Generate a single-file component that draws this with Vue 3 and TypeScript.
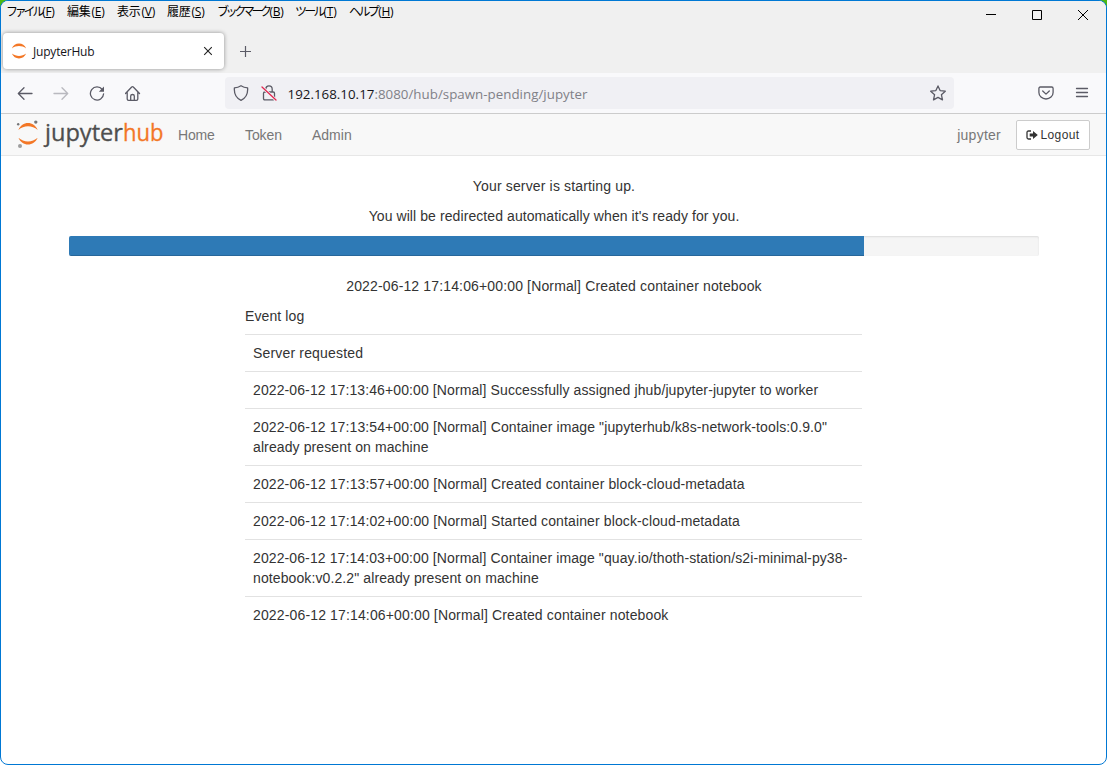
<script setup lang="ts">
interface MenuItem { label: string; key: string; width: number; spacing: number }
interface LogEvent { text: string; spacing: number }

const menus: MenuItem[] = [
  { label: 'ファイル', key: 'F', width: 61, spacing: -3.2 },
  { label: '編集', key: 'E', width: 50, spacing: -0.2 },
  { label: '表示', key: 'V', width: 50, spacing: -0.2 },
  { label: '履歴', key: 'S', width: 50, spacing: -0.2 },
  { label: 'ブックマーク', key: 'B', width: 78, spacing: -3.4 },
  { label: 'ツール', key: 'T', width: 54, spacing: -2.8 },
  { label: 'ヘルプ', key: 'H', width: 50, spacing: -2.6 },
]

const progress = 82
const current = '2022-06-12 17:14:06+00:00 [Normal] Created container notebook'
const events: LogEvent[] = [
  { text: 'Server requested', spacing: 0.17 },
  { text: '2022-06-12 17:13:46+00:00 [Normal] Successfully assigned jhub/jupyter-jupyter to worker', spacing: 0.105 },
  { text: '2022-06-12 17:13:54+00:00 [Normal] Container image "jupyterhub/k8s-network-tools:0.9.0" already present on machine', spacing: 0.11 },
  { text: '2022-06-12 17:13:57+00:00 [Normal] Created container block-cloud-metadata', spacing: 0.12 },
  { text: '2022-06-12 17:14:02+00:00 [Normal] Started container block-cloud-metadata', spacing: 0.12 },
  { text: '2022-06-12 17:14:03+00:00 [Normal] Container image "quay.io/thoth-station/s2i-minimal-py38-notebook:v0.2.2" already present on machine', spacing: 0.105 },
  { text: current, spacing: 0.145 },
]
</script>

<template>
  <div class="desktop">
    <div class="window">
      <header class="titlebar">
        <nav class="menus">
          <span v-for="m in menus" :key="m.key" class="menu" :style="{ width: m.width + 'px' }"><span :style="{ letterSpacing: m.spacing + 'px' }">{{ m.label }}</span><span class="accel">(<u>{{ m.key }}</u>)</span></span>
        </nav>
        <div class="controls">
          <svg width="12" height="12" viewBox="0 0 12 12"><path d="M1 5.5h10" /></svg>
          <svg width="12" height="12" viewBox="0 0 12 12"><path d="M1.5 1.5h9v9h-9z" /></svg>
          <svg width="12" height="12" viewBox="0 0 12 12"><path d="M1 1l10 10M11 1L1 11" /></svg>
        </div>
      </header>

      <div class="tabs">
        <div class="tab">
          <svg class="favicon" width="16" height="16" viewBox="0 0 16 16"><path d="M.8 5.400C2.200 2.200 4.800.5 8 .5s5.800 1.700 7.200 4.900C13 3.700 10.500 3 8 3S3 3.700.8 5.400zM.8 10.600C2.200 13.800 4.800 15.500 8 15.500s5.800-1.700 7.200-4.900C13 12.300 10.500 13 8 13s-5-.7-7.200-2.400z" /></svg>
          <span class="tab-title">JupyterHub</span>
          <svg class="tab-close" width="10" height="10" viewBox="0 0 10 10"><path d="M1.200 1.200l7.600 7.600M8.800 1.200L1.200 8.800" /></svg>
        </div>
        <svg class="new-tab" width="12" height="12" viewBox="0 0 12 12"><path d="M5.500 0v11M0 5.500h11" /></svg>
      </div>

      <div class="toolbar">
        <div class="nav-icons">
          <svg width="16" height="16" viewBox="0 0 16 16"><path d="M15 8.500H1.500M7 2.700L1.300 8.500 7 14.300" /></svg>
          <svg class="disabled" width="16" height="16" viewBox="0 0 16 16"><path d="M1 8.500h13.500M9 2.700L14.700 8.500 9 14.300" /></svg>
          <svg width="16" height="16" viewBox="0 0 16 16"><path d="M13.300 4.500A6.600 6.600 0 1 0 14.600 8.800" /><path d="M15 1.500v5.200H9.800z" fill="#5b5b66" stroke="none" /></svg>
          <svg width="16" height="16" viewBox="0 0 16 16"><path d="M.5 8.500l6.200-6.500q.8-.7 1.600 0L14.500 8.500M2.200 7.300v6.600q0 1.400 1.400 1.400h7.800q1.400 0 1.400-1.400V7.300M5.700 15v-4q0-1.500 1.800-1.500t1.800 1.500v4" /></svg>
        </div>
        <div class="urlbar">
          <svg width="16" height="16" viewBox="0 0 16 16"><path d="M8 .7C6 2 3.800 2.700 1.400 2.900c-.5 6 1.800 10.300 6.600 12.400 4.800-2.100 7.100-6.400 6.600-12.400C12.200 2.700 10 2 8 .7z" /></svg>
          <svg class="lock" width="16" height="16" viewBox="0 0 16 16"><path d="M4.800 7V4.300C4.800 2.100 6.200.8 8 .8s3.200 1.300 3.200 3.500V7M3.800 7h8.400q1.300 0 1.300 1.300v5.200q0 1.300-1.300 1.300H3.800q-1.300 0-1.300-1.300V8.300Q2.500 7 3.800 7z" /><path d="M1 2l14 13" stroke="#f0f0f4" stroke-width="3" /><path d="M1 2l14 13" stroke="#e22850" /></svg>
          <span class="url"><b>192.168.10.17</b>:8080/hub/spawn-pending/jupyter</span>
          <svg class="star" width="16" height="16" viewBox="0 0 16 16"><path d="M8 .9l2.100 4.700 5.200.6-3.900 3.500 1.100 5.200L8 12.400 3.500 14.900l1.100-5.200L.7 6.200l5.200-.6z" /></svg>
        </div>
        <div class="tools">
          <svg width="16" height="16" viewBox="0 0 16 16"><path d="M2.300 2h11.400q1.400 0 1.400 1.400v4A7.100 6.600 0 0 1 .9 7.400v-4Q.9 2 2.300 2zM4.700 6L8 9.100 11.300 6" /></svg>
          <svg width="14" height="16" viewBox="0 0 14 16"><path d="M1.500 3.500h11M1.500 7.500h11M1.500 11.500h11" /></svg>
        </div>
      </div>

      <nav class="navbar">
        <svg class="logo" width="150" height="40" viewBox="0 -4 150 40">
          <path fill="#f37726" d="M2.400 10.900C4.400 6.400 7.900 4 12 4s7.700 2.400 9.700 6.900C18.900 8.500 15.500 7.300 12 7.300S5.200 8.500 2.400 10.900zM2.400 18.800C4.400 23.200 7.900 25.600 12 25.600s7.700-2.400 9.700-6.800C18.900 21.200 15.500 22.400 12 22.400s-6.800-1.200-9.600-3.600z" />
          <circle cx="2.200" cy="5.300" r="1.200" fill="#767677" /><circle cx="19.800" cy="3.100" r="1.700" fill="#767677" /><circle cx="4" cy="27.100" r="2" fill="#9e9e9e" />
          <text x="29" y="21.500" fill="#4e4e4e" stroke="#4e4e4e" textLength="78" lengthAdjust="spacingAndGlyphs">jupyter</text>
          <text x="107" y="21.500" fill="#f37726" stroke="#f37726" textLength="40.500" lengthAdjust="spacingAndGlyphs">hub</text>
        </svg>
        <a class="home">Home</a><a class="token">Token</a><a class="admin">Admin</a>
        <span class="user">jupyter</span>
        <button class="logout">
          <svg width="12" height="10" viewBox="0 0 12 10"><path d="M5 1H2.500Q1 1 1 2.500v5Q1 9 2.500 9H5" fill="none" stroke="#333" stroke-width="1.300" /><path d="M3.700 3.600H7V1l4.800 4L7 9V6.400H3.700z" fill="#333" /></svg>
          <span>Logout</span>
        </button>
      </nav>

      <main>
        <p class="starting">Your server is starting up.</p>
        <p class="redirect">You will be redirected automatically when it's ready for you.</p>
        <div class="progress"><div class="bar" :style="{ width: progress + '%' }"></div></div>
        <p class="message">{{ current }}</p>
        <section class="log">
          <div class="summary">Event log</div>
          <div v-for="e in events" :key="e.text" class="event" :style="{ letterSpacing: e.spacing + 'px' }">{{ e.text }}</div>
        </section>
      </main>
    </div>
  </div>
</template>

<style>
body { margin: 0; overflow: hidden; }
</style>

<style scoped>
* { box-sizing: border-box; }
svg { display: block; flex: none; fill: none; }
.desktop { height: 765px; background: linear-gradient(#4cb910 0 20px, #fff 20px); }
.window { height: 765px; border: 1px solid #0078d4; border-radius: 8px; overflow: hidden; background: #fff; display: flex; flex-direction: column; }
.titlebar { height: 30px; flex: none; background: #f0f0f0; display: flex; justify-content: space-between; font: 12px/20px "Open Sans", "Noto Sans CJK JP", sans-serif; color: #000; }
.menus { display: flex; padding-left: 5px; }
.menu { white-space: nowrap; line-height: 21px; }
.accel { letter-spacing: -.3px; margin-left: 1px; }
.controls { display: flex; gap: 34px; padding: 8px 17px 0 0; }
.controls svg { stroke: #000; stroke-width: 1; }
.tabs { height: 42px; flex: none; background: #f0f0f0; display: flex; align-items: flex-start; padding: 2px 0 0 2px; }
.tab { width: 221px; height: 36px; background: #fff; border-radius: 4px; box-shadow: 0 0 4px rgba(0,0,0,.4); display: flex; align-items: center; padding: 0 11px 0 8px; }
.favicon { margin-right: 5px; fill: #f37726; }
.tab-title { font: 12px/16px "Open Sans", sans-serif; letter-spacing: -.2px; color: #15141a; flex: 1; padding: 2px 0 0 1px; }
.tab-close { stroke: #222; stroke-width: 1.100; }
.new-tab { margin: 13px 0 0 16px; stroke: #5b5b66; stroke-width: 1.200; }
.toolbar { height: 41px; flex: none; background: #f9f9fb; border-bottom: 1px solid #ccc; display: flex; align-items: center; stroke: #5b5b66; stroke-width: 1.300; stroke-linecap: round; stroke-linejoin: round; padding: 0 17px 0 16px; }
.nav-icons { display: flex; gap: 20px; width: 208px; }
.disabled { opacity: .4; }
.urlbar { width: 729px; height: 32px; background: #f0f0f4; border-radius: 4px; display: flex; align-items: center; padding: 0 8px; }
.lock { margin-left: 12px; }
.url { font: 13.300px/20px "Open Sans", sans-serif; letter-spacing: .03px; color: #808087; margin-left: 10.500px; padding-top: 2px; flex: 1; white-space: nowrap; }
.url b { font-weight: 400; color: #15141a; }
.tools { display: flex; gap: 21px; margin-left: auto; }
.navbar { height: 42px; flex: none; background: #f8f8f8; border-bottom: 1px solid #e7e7e7; display: flex; align-items: center; padding: 0 16px 0 15px; font: 14px/20px "Liberation Sans", Arial, sans-serif; color: #777; }
.logo { margin-right: 12px; }
.logo text { font: 23px "Open Sans", sans-serif; stroke-width: .3px; }
.home { width: 67px; letter-spacing: -.15px; }
.token { width: 67px; letter-spacing: -.1px; }
.user { margin-left: auto; margin-right: 15px; letter-spacing: .25px; }
.logout { width: 74px; height: 30px; padding: 0; border: 1px solid #ccc; border-radius: 2px; background: #fff; display: flex; align-items: center; justify-content: center; gap: 2px; font: 12px/18px "Liberation Sans", Arial, sans-serif; letter-spacing: .4px; color: #333; }
main { padding: 20px 67px 0 68px; font: 14px/20px "Liberation Sans", Arial, sans-serif; color: #333; }
p { margin: 0 0 10px; text-align: center; }
.starting { letter-spacing: .15px; }
.redirect { letter-spacing: .085px; }
.message { letter-spacing: .145px; }
.progress { height: 20px; margin-bottom: 20px; background: #f5f5f5; border-radius: 2px; overflow: hidden; box-shadow: inset 0 1px 2px rgba(0,0,0,.1); }
.bar { height: 20px; background: #2e7ab6; box-shadow: inset 0 -1px 0 rgba(0,0,0,.15); }
.log { width: 617px; margin-left: 176px; }
.summary { margin-bottom: 8px; letter-spacing: .1px; }
.event { border-top: 1px solid #e2e2e2; padding: 8px; }
</style>
